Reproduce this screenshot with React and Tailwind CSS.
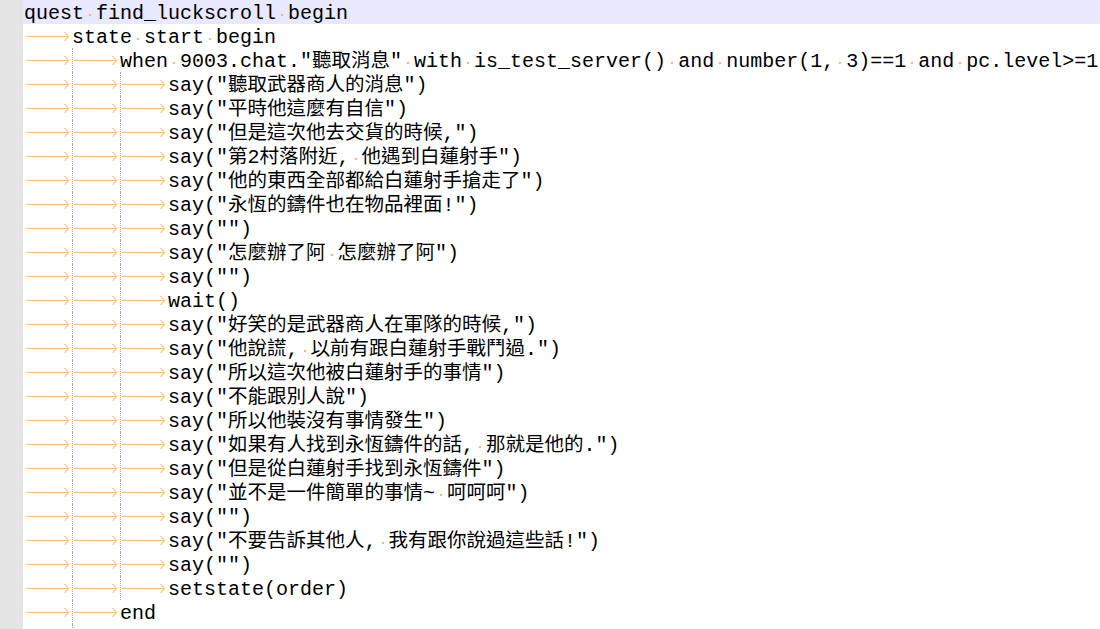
const LINES = [
  "quest find_luckscroll begin",
  "\tstate start begin",
  '\t\twhen 9003.chat."聽取消息" with is_test_server() and number(1, 3)==1 and pc.level>=1',
  '\t\t\tsay("聽取武器商人的消息")',
  '\t\t\tsay("平時他這麼有自信")',
  '\t\t\tsay("但是這次他去交貨的時候,")',
  '\t\t\tsay("第2村落附近, 他遇到白蓮射手")',
  '\t\t\tsay("他的東西全部都給白蓮射手搶走了")',
  '\t\t\tsay("永恆的鑄件也在物品裡面!")',
  '\t\t\tsay("")',
  '\t\t\tsay("怎麼辦了阿 怎麼辦了阿")',
  '\t\t\tsay("")',
  "\t\t\twait()",
  '\t\t\tsay("好笑的是武器商人在軍隊的時候,")',
  '\t\t\tsay("他說謊, 以前有跟白蓮射手戰鬥過.")',
  '\t\t\tsay("所以這次他被白蓮射手的事情")',
  '\t\t\tsay("不能跟別人說")',
  '\t\t\tsay("所以他裝沒有事情發生")',
  '\t\t\tsay("如果有人找到永恆鑄件的話, 那就是他的.")',
  '\t\t\tsay("但是從白蓮射手找到永恆鑄件")',
  '\t\t\tsay("並不是一件簡單的事情~ 呵呵呵")',
  '\t\t\tsay("")',
  '\t\t\tsay("不要告訴其他人, 我有跟你說過這些話!")',
  '\t\t\tsay("")',
  "\t\t\tsetstate(order)",
  "\t\tend",
];

const isCjk = (c) => /[\u3000-\u9fff\uff00-\uffef]/.test(c);

function tokenize(line) {
  const out = [];
  let buf = "";
  let bufCjk = false;
  const flush = () => {
    if (buf) out.push({ t: bufCjk ? "cjk" : "txt", v: buf });
    buf = "";
  };
  for (const c of line) {
    if (c === "\t" || c === " ") {
      flush();
      out.push({ t: c === "\t" ? "tab" : "sp" });
      continue;
    }
    const k = isCjk(c);
    if (buf && k !== bufCjk) flush();
    bufCjk = k;
    buf += c;
  }
  flush();
  return out;
}

function Tab({ guide }) {
  return (
    <span
      className={
        guide
          ? "inline-block align-top h-[24px] w-[48px] border-l border-dotted border-[#a8a8a8]"
          : "inline-block align-top h-[24px] w-[48px]"
      }
    >
      <svg width="48" height="24" className={guide ? "-ml-px block" : "block"}>
        <path d="M2.5 12.5H44.5M40.5 8L44.5 12.5L40.5 17" fill="none" stroke="#fbbb7e" strokeWidth="1.1" />
      </svg>
    </span>
  );
}

function Space() {
  return (
    <span className="inline-block align-top h-[24px] w-[12px]">
      <span className="block mt-[14px] mx-auto w-[2px] h-[2px] bg-[#fbb574]" />
    </span>
  );
}

function Row({ text, current }) {
  let tabIdx = 0;
  return (
    <div
      className={
        current
          ? "h-[24px] leading-[27px] whitespace-pre bg-[#e8e8ff] pl-[1px]"
          : "h-[24px] leading-[27px] whitespace-pre pl-[1px]"
      }
    >
      {tokenize(text).map((tk, i) => {
        if (tk.t === "tab") {
          const g = tabIdx > 0;
          tabIdx++;
          return <Tab key={i} guide={g} />;
        }
        if (tk.t === "sp") return <Space key={i} />;
        if (tk.t === "cjk")
          return (
            <span key={i} className="text-[19.5px]">
              {tk.v}
            </span>
          );
        return <span key={i}>{tk.v}</span>;
      })}
    </div>
  );
}

export default function App() {
  return (
    <div className="flex h-[629px] w-[1100px] overflow-hidden bg-white">
      <div className="w-[23px] shrink-0 bg-[#e4e4e4]" />
      <div
        className="flex-1 overflow-hidden text-[20px] text-black"
        style={{ fontFamily: '"Liberation Mono", "Noto Sans CJK TC", monospace' }}
      >
        {LINES.map((l, i) => (
          <Row key={i} text={l} current={i === 0} />
        ))}
        <div className="h-[24px] pl-[49px]">
          <span className="block h-[24px] border-l border-dotted border-[#a8a8a8]" />
        </div>
      </div>
    </div>
  );
}
